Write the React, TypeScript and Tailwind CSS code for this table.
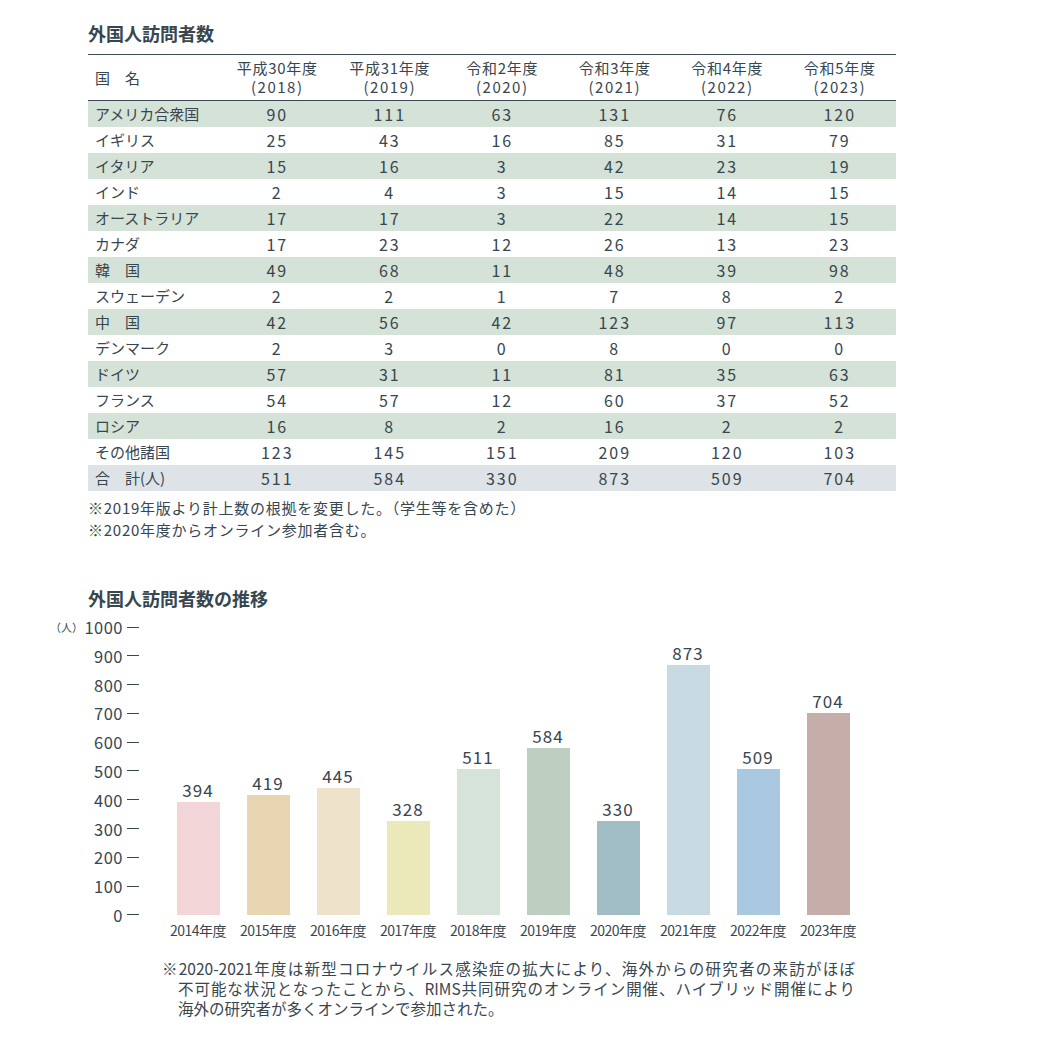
import React from "react";

const years = [
  ["平成30年度", "(2018)"],
  ["平成31年度", "(2019)"],
  ["令和2年度", "(2020)"],
  ["令和3年度", "(2021)"],
  ["令和4年度", "(2022)"],
  ["令和5年度", "(2023)"],
];

const rows: [string, number[]][] = [
  ["アメリカ合衆国", [90, 111, 63, 131, 76, 120]],
  ["イギリス", [25, 43, 16, 85, 31, 79]],
  ["イタリア", [15, 16, 3, 42, 23, 19]],
  ["インド", [2, 4, 3, 15, 14, 15]],
  ["オーストラリア", [17, 17, 3, 22, 14, 15]],
  ["カナダ", [17, 23, 12, 26, 13, 23]],
  ["韓　国", [49, 68, 11, 48, 39, 98]],
  ["スウェーデン", [2, 2, 1, 7, 8, 2]],
  ["中　国", [42, 56, 42, 123, 97, 113]],
  ["デンマーク", [2, 3, 0, 8, 0, 0]],
  ["ドイツ", [57, 31, 11, 81, 35, 63]],
  ["フランス", [54, 57, 12, 60, 37, 52]],
  ["ロシア", [16, 8, 2, 16, 2, 2]],
  ["その他諸国", [123, 145, 151, 209, 120, 103]],
];

const total = [511, 584, 330, 873, 509, 704];

const bars = [
  { y: "2014年度", v: 394, c: "bg-[#f2d5d7]" },
  { y: "2015年度", v: 419, c: "bg-[#e8d5b1]" },
  { y: "2016年度", v: 445, c: "bg-[#eee2cb]" },
  { y: "2017年度", v: 328, c: "bg-[#ebe9ba]" },
  { y: "2018年度", v: 511, c: "bg-[#d6e3d8]" },
  { y: "2019年度", v: 584, c: "bg-[#bdcfc0]" },
  { y: "2020年度", v: 330, c: "bg-[#a1bdc6]" },
  { y: "2021年度", v: 873, c: "bg-[#c7d9e1]" },
  { y: "2022年度", v: 509, c: "bg-[#aac9e0]" },
  { y: "2023年度", v: 704, c: "bg-[#c5adaa]" },
];

const ticks = [1000, 900, 800, 700, 600, 500, 400, 300, 200, 100, 0];

export default function App() {
  return (
    <div className="w-[1044px] h-[1042px] bg-white text-[#37464f] font-['Noto_Sans_CJK_JP',sans-serif] overflow-hidden">
      <div className="ml-[88px] w-[808px] pt-[21px]">
        <h2 className="text-[18px] leading-[24px] font-bold">外国人訪問者数</h2>
        <div className="mt-[9px] border-t border-[#3c4a54]">
          <div className="grid grid-cols-[133px_repeat(6,1fr)] pt-[3px] pb-[4px] border-b border-[#3c4a54] text-[15px] leading-[19px]">
            <div className="pl-[7px] flex items-center">国　名</div>
            {years.map(([a, b]) => (
              <div key={a} className="text-center">
                <div className="tracking-[0.05em]">{a}</div>
                <div className="tracking-[0.1em]">{b}</div>
              </div>
            ))}
          </div>
          {rows.map(([name, vals], i) => (
            <div
              key={name}
              className={`grid grid-cols-[133px_repeat(6,1fr)] h-[26px] leading-[26px] text-[15px] ${i % 2 === 0 ? "bg-[#d5e2d7]" : "bg-white"}`}
            >
              <div className="pl-[7px] whitespace-nowrap">{name}</div>
              {vals.map((v, j) => (
                <div key={j} className="text-center text-[16px] tracking-[0.12em]">{v}</div>
              ))}
            </div>
          ))}
          <div className="grid grid-cols-[133px_repeat(6,1fr)] h-[26px] leading-[26px] text-[15px] bg-[#dde3e6]">
            <div className="pl-[7px] whitespace-nowrap">合　計(人)</div>
            {total.map((v, j) => (
              <div key={j} className="text-center text-[16px] tracking-[0.12em]">{v}</div>
            ))}
          </div>
        </div>
        <div className="mt-[6px] text-[15px] leading-[22px] tracking-[0.05em]">
          <div>※2019年版より計上数の根拠を変更した。（学生等を含めた）</div>
          <div>※2020年度からオンライン参加者含む。</div>
        </div>
        <h2 className="mt-[45px] text-[18px] leading-[24px] font-bold">外国人訪問者数の推移</h2>
      </div>

      <div className="mt-[7px] flex">
        <div className="ml-[50px] w-[89px] h-[308px] flex flex-col justify-between">
          {ticks.map((t) => (
            <div key={t} className="h-[20px] flex items-center justify-between">
              <span className="text-[11px] leading-[20px]">{t === 1000 ? "（人）" : ""}</span>
              <span className="flex items-center">
                <span className="text-[16.5px] leading-[20px] tracking-[0.03em]">{t}</span>
                <span className="ml-[4px] block w-[12px] h-px bg-[#37464f]"></span>
              </span>
            </div>
          ))}
        </div>
        <div className="ml-[24px]">
          <div className="flex h-[298px] items-end">
            {bars.map((b) => (
              <div key={b.y} className="w-[70px] flex flex-col items-center justify-end">
                <div className="text-[17px] leading-[20px] mb-[2px] tracking-[0.06em]">{b.v}</div>
                <div className={`w-[43px] ${b.c}`} style={{ height: `${b.v * 0.2864}px` }}></div>
              </div>
            ))}
          </div>
          <div className="flex mt-[5px]">
            {bars.map((b) => (
              <div key={b.y} className="w-[70px] text-center text-[14px] leading-[20px] tracking-[-0.5px] whitespace-nowrap">
                {b.y}
              </div>
            ))}
          </div>
        </div>
      </div>

      <div className="ml-[162px] mt-[18px] text-[15.5px] leading-[20px]">
        <div className="w-[693px] text-justify [text-align-last:justify] whitespace-nowrap">※2020-2021年度は新型コロナウイルス感染症の拡大により、海外からの研究者の来訪がほぼ</div>
        <div className="ml-[16px] w-[677px] text-justify [text-align-last:justify] whitespace-nowrap">不可能な状況となったことから、RIMS共同研究のオンライン開催、ハイブリッド開催により</div>
        <div className="ml-[16px]">海外の研究者が多くオンラインで参加された。</div>
      </div>
    </div>
  );
}
